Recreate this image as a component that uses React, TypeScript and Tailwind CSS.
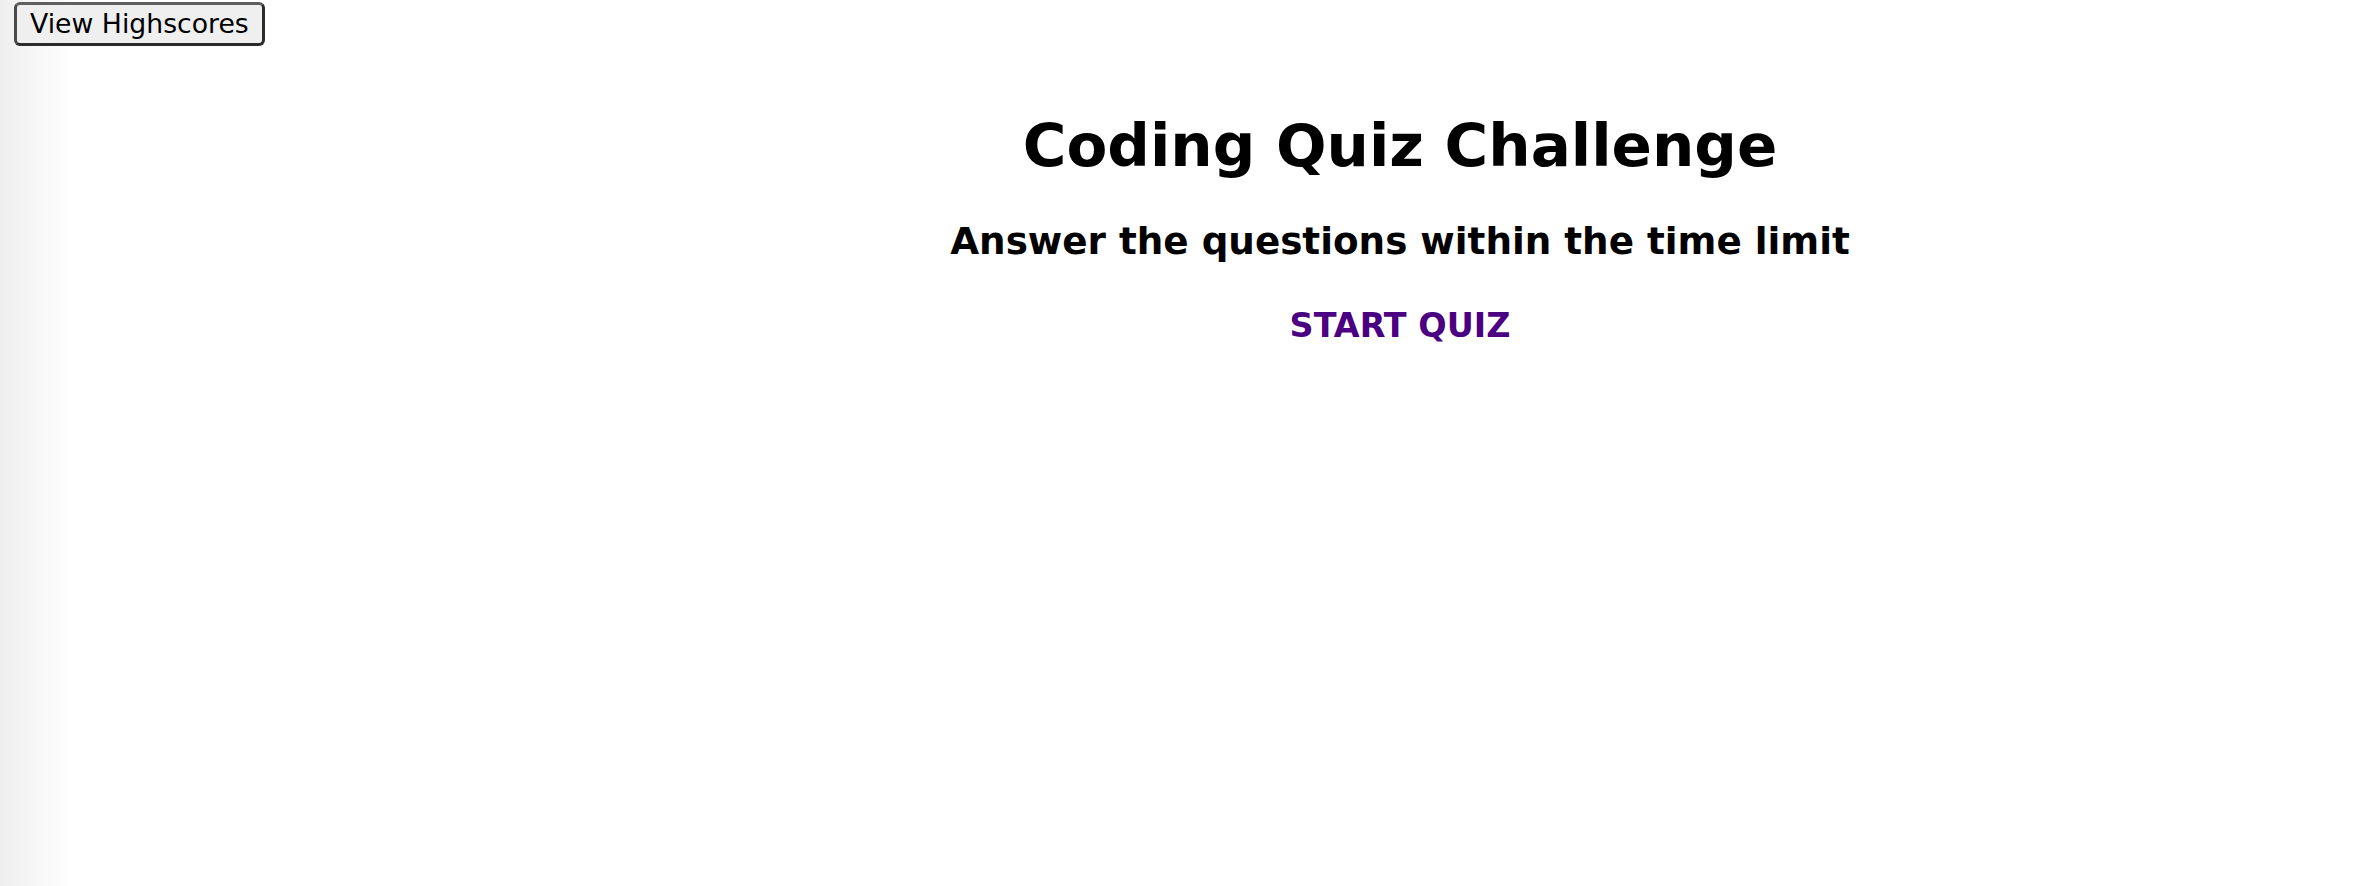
export default function App() {
    return (
        <div className="min-h-screen bg-[linear-gradient(to_right,#eeeeee,#ffffff_72px)] font-['DejaVu_Sans',Verdana,sans-serif] text-black">
            {/* Top bar */}
            <div className="pl-[14px] pt-[2px]">
                <button className="h-[44px] px-[13px] text-[26.7px] leading-none bg-[#efefef] border-[3px] border-[#2b2b2b] border-t-[#5f5f5f] border-l-[#4a4a4a] rounded-[6px]">
                    View Highscores
                </button>
            </div>

            {/* Start screen */}
            <div className="pl-[444px] text-center">
                <h1 className="mt-[70px] text-[59.5px] leading-[60px] font-bold">Coding Quiz Challenge</h1>
                <h2 className="mt-[47px] text-[37.3px] leading-[37px] font-bold">Answer the questions within the time limit</h2>
                <div className="mt-[49px] text-[33.4px] leading-[33px] font-bold text-[#4b0082]">START QUIZ</div>
            </div>
        </div>
    );
}
